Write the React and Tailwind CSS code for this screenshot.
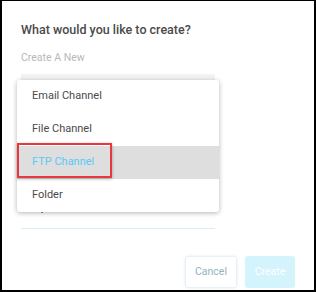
import React from "react";

export default function App() {
  const items = ["Email Channel", "File Channel", "FTP Channel", "Folder"];
  return (
    <div className="w-[316px] h-[292px] bg-black pt-px pl-[2px] pr-[2px] pb-[2px]" style={{ fontFamily: "Roboto, 'Liberation Sans', sans-serif" }}>
      <div className="relative w-full h-full bg-white flex flex-col">
        <div className="pl-[19px] pt-[20px] text-[12.5px] leading-[18px] font-medium text-[#4a4a4a]">
          What would you like to create?
        </div>
        <div className="pl-[19px] mt-[12px] text-[10.5px] leading-[14px] text-[#b8b8b8]">Create A New</div>
        <div className="ml-[19px] mt-[9px] w-[194px] h-[9px] bg-[#f3f3f3]" />
        <div className="ml-[19px] w-[194px] h-[146px] flex flex-col justify-end border-b border-[#d6eef8]">
          <div className="flex items-center h-[28px] pb-[12px] pl-[10px] pr-[8px] text-[11px] text-[#444]">
            <span className="flex-1">Ftp</span>
            <span className="text-[10px] text-[#888] mr-[12px]">✕</span>
            <span className="text-[9px] text-[#888]">▼</span>
          </div>
        </div>
        <div className="flex-1" />
        <div className="flex justify-end gap-[8px] pr-[19px] pb-[2px]">
          <div className="w-[52px] h-[32px] rounded-[3px] border border-[#e6f2f6] shadow-[0_0_3px_rgba(180,210,225,0.4)] flex items-center justify-center text-[10.5px] text-[#8fb3c2]">Cancel</div>
          <div className="w-[50px] h-[32px] rounded-[3px] bg-[#d3f3fd] flex items-center justify-center text-[10.5px] text-white">Create</div>
        </div>

        <div className="absolute left-[15px] top-[79px] w-[202px] bg-white rounded-[3px] shadow-[0_1px_5px_rgba(0,0,0,0.3)] flex flex-col">
          {items.map((t, i) => (
            <div
              key={t}
              className={
                i === 2
                  ? "h-[33px] flex items-center pl-[15px] text-[11px] text-[#5cc8f5] bg-[#dedede]"
                  : "h-[33px] flex items-center pl-[15px] text-[11px] text-[#4a4a4a]"
              }
            >
              {t}
            </div>
          ))}
        </div>
        <div className="absolute left-[15px] top-[142px] w-[95px] h-[35px] border-2 border-[#e8383d] shadow-[0_1px_3px_rgba(0,0,0,0.3)]" />
      </div>
    </div>
  );
}
